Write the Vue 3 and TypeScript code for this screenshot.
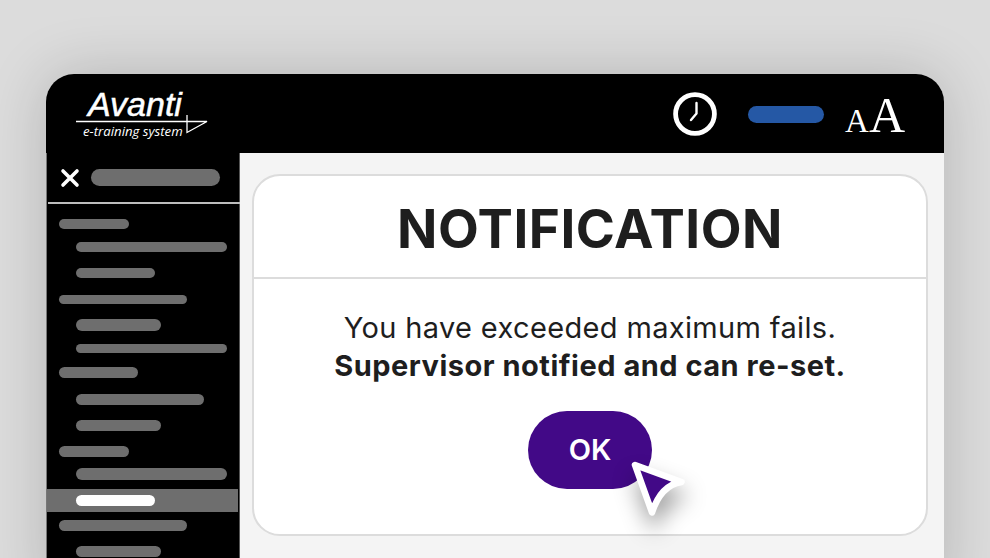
<template>
  <div class="page">
    <div class="window">
      <header class="topbar">
        <div class="logo">
          <span class="logo-name">Avanti</span>
          <span class="logo-sub">e-training system</span>
          <svg class="logo-mark" width="134" height="20" viewBox="0 0 134 20">
            <path d="M0 7.500H131L111 18.500V1" fill="none" stroke="#fff" stroke-width="1.300" />
          </svg>
        </div>
        <div class="top-actions">
          <svg class="clock" width="44" height="44" viewBox="0 0 44 44">
            <circle cx="22" cy="22" r="19.400" fill="none" stroke="#fff" stroke-width="4.800" />
            <path d="M23.500 11V21.500L18 28" fill="none" stroke="#fff" stroke-width="2.400" stroke-linecap="round" stroke-linejoin="round" />
          </svg>
          <div class="top-pill"></div>
          <div class="font-size"><span class="a-small">A</span><span class="a-big">A</span></div>
        </div>
      </header>
      <div class="content">
        <aside class="sidebar">
          <div class="side-head">
            <svg width="20" height="20" viewBox="0 0 20 20">
              <path d="M3 3L17 17M17 3L3 17" stroke="#fff" stroke-width="3.600" stroke-linecap="round" />
            </svg>
            <div class="side-title"></div>
          </div>
          <div class="side-list">
            <div
              v-for="(item, i) in items"
              :key="i"
              class="side-row"
              :class="{ sub: item.sub, active: item.active }"
              :style="{ marginTop: item.gap + 'px' }"
            >
              <div class="side-bar" :style="{ width: item.width + 'px', height: item.height + 'px' }"></div>
            </div>
          </div>
        </aside>
        <main class="main">
          <section class="card">
            <h1 class="card-title">NOTIFICATION</h1>
            <div class="card-body">
              <p class="msg">You have exceeded maximum fails.</p>
              <p class="msg strong">Supervisor notified and can re-set.</p>
              <div class="btn-wrap">
                <button class="ok">OK</button>
                <svg class="cursor" width="76" height="76" viewBox="0 0 76 76">
                  <path d="M7 7L53.500 24Q33 27 24 54.500Z" fill="#420987" stroke="#fff" stroke-width="6.500" stroke-linejoin="round" />
                </svg>
              </div>
            </div>
          </section>
        </main>
      </div>
    </div>
  </div>
</template>

<script setup lang="ts">
interface SideItem {
  width: number
  height: number
  gap: number
  sub?: boolean
  active?: boolean
}

// 侧边栏占位条
const items: SideItem[] = [
  { width: 70, height: 10, gap: 0 },
  { width: 151, height: 10, gap: 13, sub: true },
  { width: 79, height: 10, gap: 16, sub: true },
  { width: 128, height: 9, gap: 17 },
  { width: 85, height: 12, gap: 15, sub: true },
  { width: 151, height: 9, gap: 13, sub: true },
  { width: 79, height: 11, gap: 14 },
  { width: 128, height: 11, gap: 16, sub: true },
  { width: 85, height: 11, gap: 15, sub: true },
  { width: 70, height: 11, gap: 15 },
  { width: 151, height: 12, gap: 11, sub: true },
  { width: 79, height: 11, gap: 9, sub: true, active: true },
  { width: 128, height: 11, gap: 8 },
  { width: 85, height: 11, gap: 15, sub: true }
]
</script>

<style>
html,
body {
  margin: 0;
  overflow: hidden;
}
</style>

<style scoped>
.page {
  height: 558px;
  padding: 74px 46px 0;
  box-sizing: border-box;
  background: #dcdcdc;
  overflow: hidden;
  font-family: Inter, "Liberation Sans", sans-serif;
}

.window {
  height: 520px;
  border-radius: 28px 28px 0 0;
  background: #f4f4f4;
  overflow: hidden;
  box-shadow: 0 0 60px rgba(0, 0, 0, 0.18);
}

.topbar {
  height: 79px;
  background: #000;
  display: flex;
  align-items: flex-start;
  justify-content: space-between;
  padding: 0 39px 0 30px;
}

.logo {
  position: relative;
  width: 134px;
  height: 79px;
  color: #fff;
  font-style: italic;
}

.logo-name {
  position: absolute;
  left: 12px;
  top: 10px;
  font-family: "Liberation Sans", sans-serif;
  font-size: 34px;
  line-height: 40px;
  -webkit-text-stroke: 0.5px #fff;
}

.logo-sub {
  position: absolute;
  left: 7px;
  top: 49px;
  font-family: "Open Sans", sans-serif;
  font-size: 13.200px;
  line-height: 16px;
  white-space: nowrap;
}

.logo-mark {
  position: absolute;
  left: 0;
  top: 40px;
}

.top-actions {
  display: flex;
  align-items: center;
  height: 79px;
}

.clock {
  margin-right: 31px;
}

.top-pill {
  width: 76px;
  height: 17px;
  border-radius: 9px;
  background: #2558a5;
  margin: 2px 21px 0 0;
}

.font-size {
  display: flex;
  align-items: baseline;
  color: #fff;
  font-family: "Liberation Serif", serif;
  line-height: 1;
  margin-top: 2px;
}

.a-small {
  font-size: 33px;
}

.a-big {
  font-size: 50px;
}

.content {
  display: flex;
  height: 441px;
}

.sidebar {
  width: 192px;
  flex-shrink: 0;
  background: #000;
  border-left: 1px solid #777;
  border-right: 1px solid #555;
}

.side-head {
  height: 49px;
  display: flex;
  align-items: center;
  gap: 11px;
  padding: 0 0 0 12px;
  border-bottom: 2px solid #bdbdbd;
  margin: 0 -1px 0 1px;
}

.side-title {
  width: 129px;
  height: 17px;
  border-radius: 9px;
  background: #6e6e6e;
}

.side-list {
  padding-top: 15px;
}

.side-row {
  padding-left: 12px;
}

.side-row.sub {
  padding-left: 29px;
}

.side-bar {
  border-radius: 6px;
  background: #6e6e6e;
}

.side-row.active {
  background: #6e6e6e;
  padding-top: 6px;
  padding-bottom: 6px;
  margin-right: 1px;
}

.side-row.active .side-bar {
  background: #fff;
}

.main {
  flex: 1;
  padding: 21px 16px 0 12px;
}

.card {
  height: 362px;
  box-sizing: border-box;
  background: #fff;
  border: 2px solid #dcdcdc;
  border-radius: 28px;
  text-align: center;
  color: #1e1e1e;
}

.card-title {
  margin: 0;
  height: 101px;
  line-height: 107px;
  border-bottom: 2px solid #dcdcdc;
  font-size: 53px;
  font-weight: 700;
  letter-spacing: 0.5px;
}

.card-body {
  padding-top: 30px;
}

.msg {
  margin: 0;
  font-size: 29px;
  line-height: 38px;
  letter-spacing: 0.35px;
}

.msg.strong {
  font-weight: 700;
  letter-spacing: 0.5px;
}

.btn-wrap {
  position: relative;
  width: 124px;
  margin: 26px auto 0;
}

.ok {
  display: block;
  width: 124px;
  height: 78px;
  padding: 0 0 2px;
  border: none;
  border-radius: 39px;
  background: #420987;
  color: #fff;
  font-family: inherit;
  font-size: 29px;
  font-weight: 600;
}

.cursor {
  position: absolute;
  left: 100px;
  top: 47px;
  overflow: visible;
  filter: drop-shadow(2px 14px 11px rgba(0, 0, 0, 0.38));
}
</style>
